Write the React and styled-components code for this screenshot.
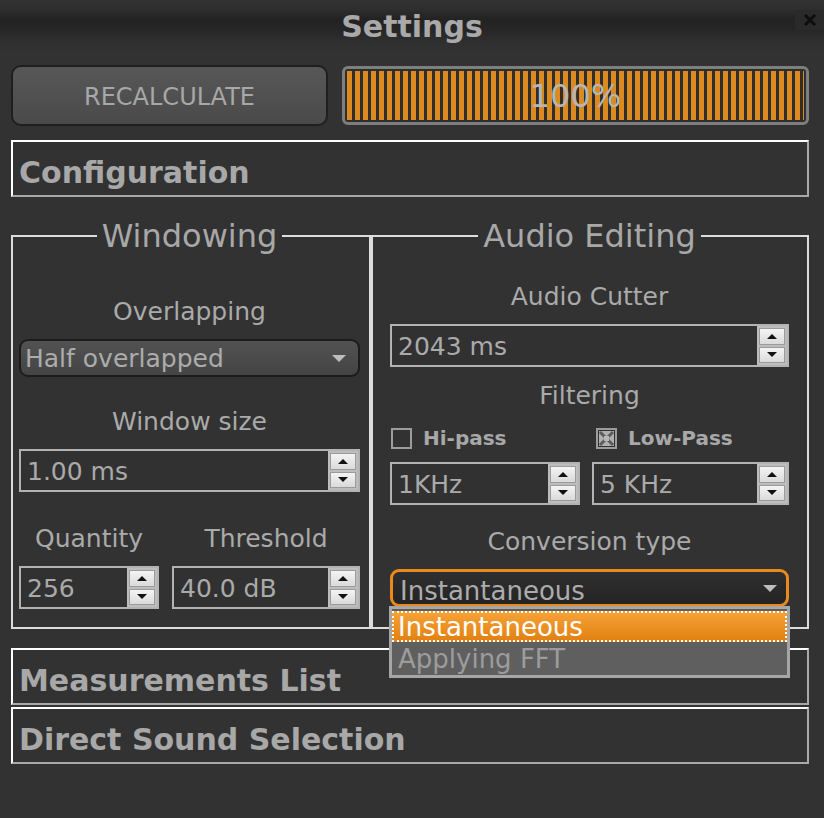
import React from 'react';
import styled, { createGlobalStyle, css } from 'styled-components';

const GlobalStyle = createGlobalStyle`
  *, *::before, *::after {
    box-sizing: border-box;
  }
  body {
    margin: 0;
    background: #323232;
    font-family: "DejaVu Sans", Verdana, sans-serif;
  }
`;

const Page = styled.div`
  width: 824px;
  height: 818px;
  background: #323232;
  color: #a8a8a8;
  font-family: "DejaVu Sans", Verdana, sans-serif;
`;

const Header = styled.header`
  display: grid;
  grid-template-columns: 1fr auto 1fr;
  height: 54px;
  background: linear-gradient(
    to bottom,
    #333333 0px,
    #2e2e2e 9px,
    #232323 19px,
    #252525 28px,
    #2f2f2f 42px,
    #333333 54px
  );
`;

const Title = styled.h1`
  grid-column: 2;
  margin: 0;
  padding-top: 9px;
  font-size: 30px;
  line-height: 36px;
  font-weight: bold;
  color: #a9a9a9;
`;

const CloseButton = styled.button`
  grid-column: 3;
  justify-self: end;
  align-self: start;
  margin-top: 10px;
  width: 29px;
  height: 20px;
  padding: 0;
  border: none;
  background: #2a2a2a;
  display: flex;
  align-items: center;
  justify-content: center;
`;

const Content = styled.main`
  display: flex;
  flex-direction: column;
  padding: 11px 15px 0 11px;
`;

const Toolbar = styled.div`
  display: flex;
  gap: 14px;
  height: 61px;
`;

const RecalcButton = styled.button`
  width: 317px;
  border: 2px solid #1f1f1f;
  border-radius: 10px;
  background: linear-gradient(to bottom, #575757, #4a4a4a);
  color: #a8a8a8;
  font-family: inherit;
  font-size: 24px;
  padding: 2px 0 0;
`;

const Progress = styled.div`
  flex: 1;
  margin: 1px 0;
  border: 3px solid #7e7e7e;
  border-radius: 6px;
  padding: 2px;
  background: #2e2e2e;
`;

const ProgressFill = styled.div`
  height: 100%;
  background: repeating-linear-gradient(
    90deg,
    #dc8a1d 0 5px,
    #2e2e2e 5px 8px
  );
  display: flex;
  align-items: center;
  justify-content: center;
  font-size: 32px;
  color: #b6b6b6;
`;

const Section = styled.div`
  height: 57px;
  margin-top: ${p => p.$top}px;
  border: 2px solid;
  border-color: #ffffff #a8a8a8 #a8a8a8 #ffffff;
  padding: 8px 6px 0;
  font-size: 30px;
  line-height: 45px;
  font-weight: bold;
  color: #a8a8a8;
  white-space: nowrap;
  overflow: hidden;
`;

const Groups = styled.div`
  display: flex;
  margin-top: 21px;
`;

const Group = styled.fieldset`
  margin: 0;
  min-width: 0;
  border: 2px solid #dcdcdc;
  display: flex;
  flex-direction: column;
  ${p => p.$wide
    ? css`flex: 1; padding: 28px 18px 19px 17px;`
    : css`width: 360px; padding: 43px 9px 18px 6px;`}
`;

const Legend = styled.legend`
  margin: 0 auto;
  padding: 0 5px;
  font-size: 32px;
  line-height: 36px;
  color: #a8a8a8;
`;

const Label = styled.div`
  margin-top: ${p => p.$top || 0}px;
  margin-bottom: 12px;
  text-align: center;
  font-size: 25px;
  line-height: 30px;
  color: #aaaaaa;
`;

const Pair = styled.div`
  display: grid;
  grid-template-columns: ${p => p.$cols};
  column-gap: ${p => p.$gap}px;
  margin-top: ${p => p.$top || 0}px;
`;

const Column = styled.div`
  display: flex;
  flex-direction: column;
`;

const SpinField = styled.div`
  display: flex;
  height: 43px;
  margin-top: ${p => p.$top || 0}px;
  border: 2px solid #b3b3b3;
  background: #313131;
`;

const SpinValue = styled.div`
  flex: 1;
  display: flex;
  align-items: center;
  padding: 2px 0 0 6px;
  font-size: 25px;
  color: #aaaaaa;
  white-space: nowrap;
`;

const Spinner = styled.div`
  width: 30px;
  display: flex;
  flex-direction: column;
  gap: 2px;
  padding: 2px;
  background: #bdbdbd;
`;

const SpinButton = styled.div`
  flex: 1;
  display: flex;
  align-items: center;
  justify-content: center;
  border: 1px solid #9b9b9b;
  background: linear-gradient(to bottom, #f4f4f4, #dadada);
`;

const Arrow = styled.span`
  width: 0;
  height: 0;
  border-left: 5px solid transparent;
  border-right: 5px solid transparent;
  ${p => p.$down
    ? css`border-top: 5px solid #111;`
    : css`border-bottom: 5px solid #111;`}
`;

const SelectWrap = styled.div`
  position: relative;
`;

const Select = styled.div`
  height: 38px;
  display: flex;
  align-items: center;
  justify-content: space-between;
  border-radius: 9px;
  white-space: nowrap;
  ${p => p.$open
    ? css`
        border: 3px solid #e98b1c;
        background: linear-gradient(to bottom, #2f2f2f, #242424);
        padding: 6px 9px 0 7px;
        font-size: 26px;
      `
    : css`
        border: 2px solid #1c1c1c;
        background: linear-gradient(to bottom, #525252, #444444);
        padding: 0 12px 0 4px;
        font-size: 25px;
      `}
  color: #acacac;
`;

const SelectArrow = styled.span`
  width: 0;
  height: 0;
  border-left: 7px solid transparent;
  border-right: 7px solid transparent;
  border-top: 7px solid #bdbdbd;
  margin-bottom: ${p => (p.$open ? 6 : 0)}px;
`;

const Dropdown = styled.ul`
  position: absolute;
  top: calc(100% - 1px);
  left: -1px;
  right: -1px;
  z-index: 10;
  margin: 0;
  padding: 2px 0 0;
  list-style: none;
  border: 3px solid #a6a6a6;
  background: #5f5f5f;
`;

const Option = styled.li`
  height: ${p => (p.$active ? 31 : 33)}px;
  display: flex;
  align-items: center;
  padding-left: 6px;
  font-size: 26px;
  white-space: nowrap;
  ${p => p.$active
    ? css`
        color: #ffffff;
        background: linear-gradient(to bottom, #f7a338, #e07f10);
        outline: 2px dotted #ffffff;
        outline-offset: -2px;
      `
    : css`
        color: #9c9c9c;
      `}
`;

const CheckRow = styled.div`
  display: grid;
  grid-template-columns: 190px 1fr;
  column-gap: 12px;
  height: 22px;
  margin-top: 3px;
`;

const CheckItem = styled.label`
  display: flex;
  align-items: center;
  gap: 11px;
  padding-left: ${p => p.$indent}px;
  font-size: 20px;
  font-weight: bold;
  color: #a8a8a8;
`;

const CheckBox = ({ checked }) => (
  <svg width="21" height="21" viewBox="0 0 21 21">
    <rect x="1" y="1" width="19" height="19" fill="none" stroke="#9c9c9c" strokeWidth="2" />
    {checked && (
      <>
        <rect x="3" y="3" width="15" height="15" fill="#b0b0b0" />
        <path d="M4 4 L17 17 M17 4 L4 17" stroke="#5c5c5c" strokeWidth="3" />
        <rect x="8" y="8" width="5" height="5" fill="#b8b8b8" />
      </>
    )}
  </svg>
);

const SpinBox = ({ value, top }) => (
  <SpinField $top={top}>
    <SpinValue>{value}</SpinValue>
    <Spinner>
      <SpinButton><Arrow /></SpinButton>
      <SpinButton><Arrow $down /></SpinButton>
    </Spinner>
  </SpinField>
);

const App = () => {
  return (
    <Page>
      <GlobalStyle />
      <Header>
        <Title>Settings</Title>
        <CloseButton aria-label="close">
          <svg width="14" height="12" viewBox="0 0 14 12">
            <path d="M2 1 L12 11 M12 1 L2 11" stroke="#0e0e0e" strokeWidth="3" />
          </svg>
        </CloseButton>
      </Header>

      <Content>
        <Toolbar>
          <RecalcButton>RECALCULATE</RecalcButton>
          <Progress>
            <ProgressFill>100%</ProgressFill>
          </Progress>
        </Toolbar>

        <Section $top={14}>Configuration</Section>

        <Groups>
          <Group>
            <Legend>Windowing</Legend>
            <Label>Overlapping</Label>
            <Select>
              <span>Half overlapped</span>
              <SelectArrow />
            </Select>
            <Label $top={30}>Window size</Label>
            <SpinBox value="1.00 ms" />
            <Pair $cols="140px 1fr" $gap={13} $top={32}>
              <Column>
                <Label>Quantity</Label>
                <SpinBox value="256" />
              </Column>
              <Column>
                <Label>Threshold</Label>
                <SpinBox value="40.0 dB" />
              </Column>
            </Pair>
          </Group>

          <Group $wide>
            <Legend>Audio Editing</Legend>
            <Label>Audio Cutter</Label>
            <SpinBox value="2043 ms" />
            <Label $top={14}>Filtering</Label>
            <CheckRow>
              <CheckItem $indent={1}>
                <CheckBox />
                Hi-pass
              </CheckItem>
              <CheckItem $indent={4}>
                <CheckBox checked />
                Low-Pass
              </CheckItem>
            </CheckRow>
            <Pair $cols="190px 1fr" $gap={12} $top={14}>
              <SpinBox value="1KHz" />
              <SpinBox value="5 KHz" />
            </Pair>
            <Label $top={22}>Conversion type</Label>
            <SelectWrap>
              <Select $open>
                <span>Instantaneous</span>
                <SelectArrow $open />
              </Select>
              <Dropdown>
                <Option $active>Instantaneous</Option>
                <Option>Applying FFT</Option>
              </Dropdown>
            </SelectWrap>
          </Group>
        </Groups>

        <Section $top={19}>Measurements List</Section>
        <Section $top={2}>Direct Sound Selection</Section>
      </Content>
    </Page>
  );
};

export default App;
